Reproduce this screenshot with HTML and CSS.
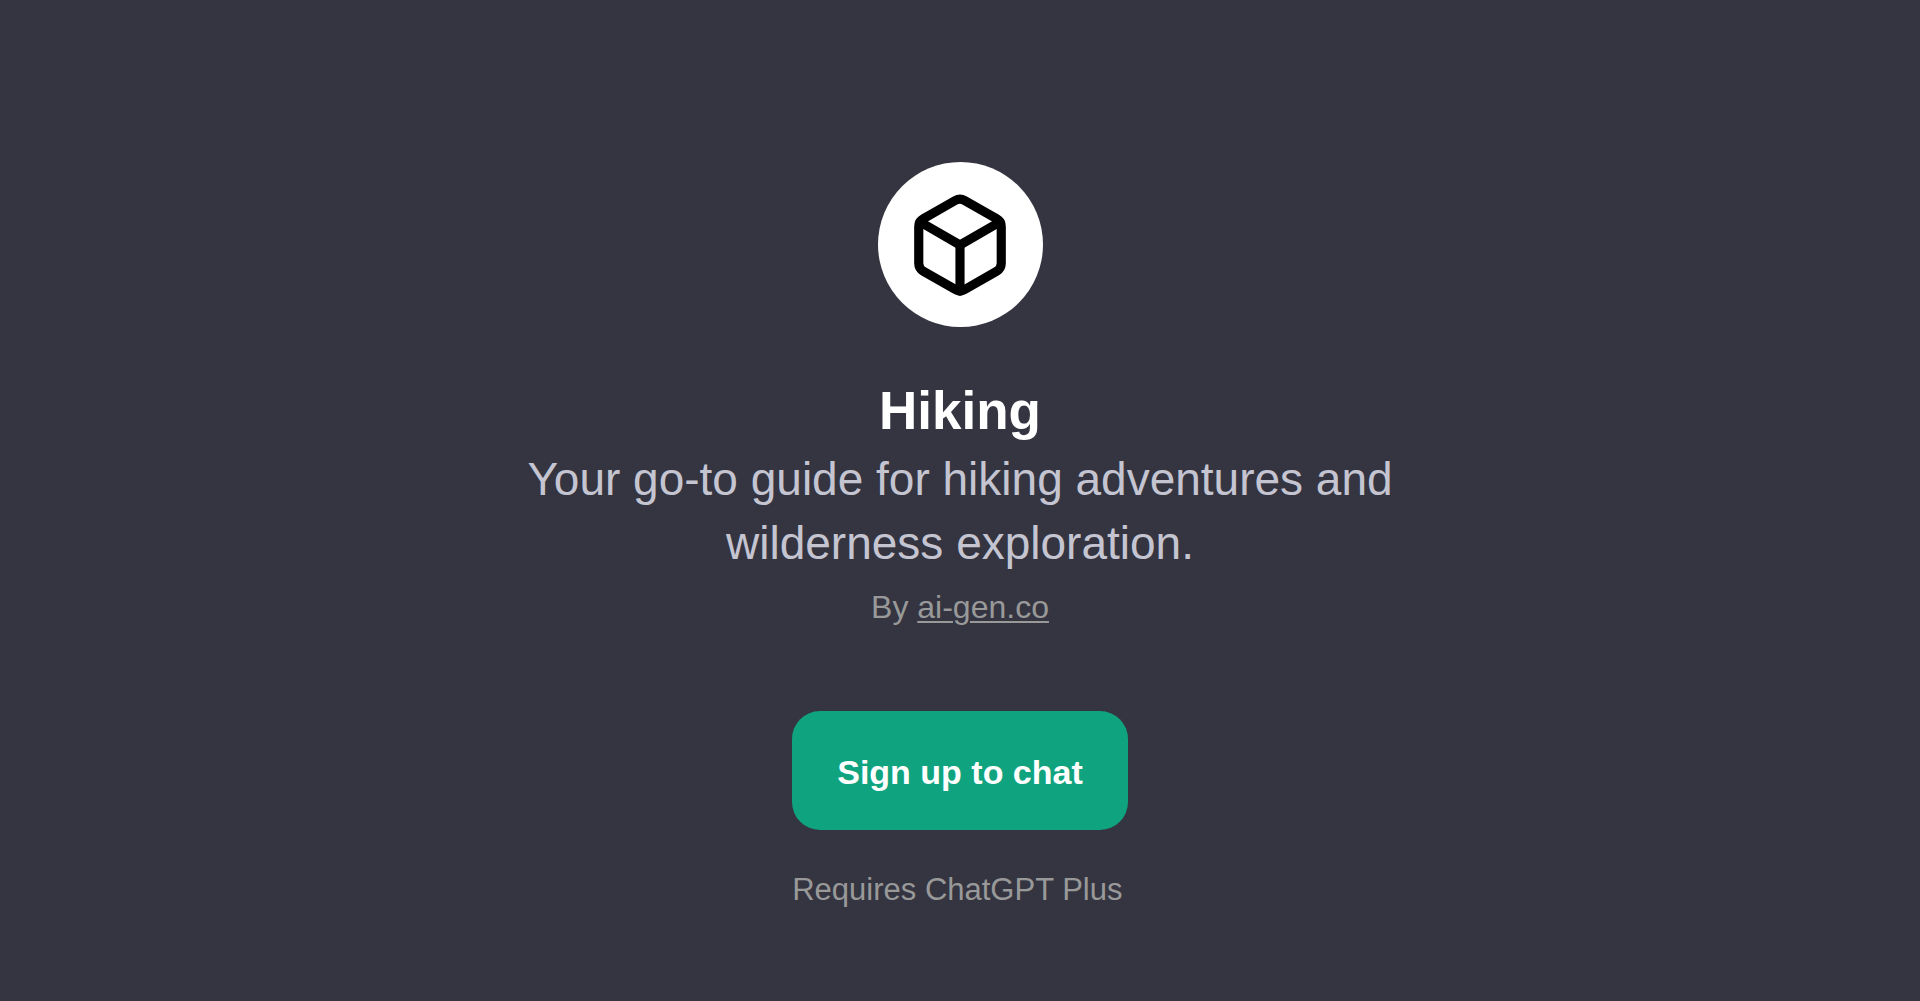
FILE: index.html
```html
<!DOCTYPE html>
<html lang="en">
<head>
    <meta charset="UTF-8">
    <meta name="viewport" content="width=device-width, initial-scale=1">
    <title>ChatGPT - Hiking</title>
    <link rel="stylesheet" href="styles.css">
</head>
<body>

    <main class="page">
        <div class="avatar">
            <svg class="avatar-icon" viewBox="0 0 24 24" fill="none" stroke="currentColor" stroke-width="2" stroke-linecap="round" stroke-linejoin="round" aria-hidden="true">
                <path d="M21 16V8a2 2 0 0 0-1-1.73l-7-4a2 2 0 0 0-2 0l-7 4A2 2 0 0 0 3 8v8a2 2 0 0 0 1 1.73l7 4a2 2 0 0 0 2 0l7-4A2 2 0 0 0 21 16z"></path>
                <polyline points="3.27 6.96 12 12.01 20.73 6.96"></polyline>
                <line x1="12" y1="22.08" x2="12" y2="12"></line>
            </svg>
        </div>

        <h1 class="title">Hiking</h1>
        <p class="description">Your go-to guide for hiking adventures and wilderness exploration.</p>
        <p class="author">By <a href="#">ai-gen.co</a></p>

        <div class="actions">
            <button class="signup-btn" type="button">Sign up to chat</button>
            <p class="note">Requires ChatGPT Plus</p>
        </div>
    </main>

</body>
</html>
```

FILE: styles.css
```css
* {
    box-sizing: border-box;
}
body {
    margin: 0;
    background: #343541;
    color: #fff;
    font-family: "Liberation Sans", Arial, sans-serif;
}
.page {
    display: flex;
    flex-direction: column;
    align-items: center;
    min-height: 100vh;
    padding: 162px 24px 64px;
    text-align: center;
}
.avatar {
    display: flex;
    align-items: center;
    justify-content: center;
    width: 165px;
    height: 165px;
    border-radius: 50%;
    background: #fff;
    color: #000;
}
.avatar-icon {
    width: 110px;
    height: 110px;
}
.title {
    margin: 48px 0 0;
    font-size: 53px;
    font-weight: 600;
    line-height: 72px;
}
.description {
    max-width: 910px;
    margin: 0;
    color: #c5c5d2;
    font-size: 46px;
    line-height: 64px;
}
.author {
    margin: 8px 0 0;
    color: #999;
    font-size: 32px;
    line-height: 48px;
}
.author a {
    color: inherit;
    text-decoration-thickness: 2px;
    text-underline-offset: 3px;
}
.actions {
    display: flex;
    flex-direction: column;
    margin-top: 80px;
    text-align: left;
}
.signup-btn {
    padding: 34px 45px 30px;
    border: none;
    border-radius: 28px;
    background: #10a37f;
    color: #fff;
    font-family: inherit;
    font-size: 34px;
    font-weight: 600;
    line-height: 55px;
    cursor: pointer;
}
.signup-btn:hover {
    background: #1a7f64;
}
.note {
    margin: 36px 0 0;
    color: #999;
    font-size: 31px;
    line-height: 48px;
}
```
